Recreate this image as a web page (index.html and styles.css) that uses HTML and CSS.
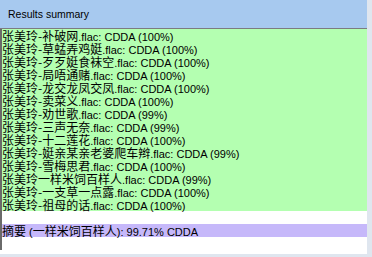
FILE: index.html
```html
<!DOCTYPE html>
<html lang="zh">
<head>
    <meta charset="UTF-8">
    <title>Results summary</title>
    <link rel="stylesheet" href="styles.css">
</head>
<body>
    <div class="window">
        <div class="header">Results summary</div>
        <div class="panel">
            <div class="list">
                <p><span class="cn">张美玲-补破网</span>.flac: CDDA (100%)</p>
                <p><span class="cn">张美玲-草蜢弄鸡娗</span>.flac: CDDA (100%)</p>
                <p><span class="cn">张美玲-歹歹娗食袜空</span>.flac: CDDA (100%)</p>
                <p><span class="cn">张美玲-局唔通赌</span>.flac: CDDA (100%)</p>
                <p><span class="cn">张美玲-龙交龙凤交凤</span>.flac: CDDA (100%)</p>
                <p><span class="cn">张美玲-卖菜义</span>.flac: CDDA (100%)</p>
                <p><span class="cn">张美玲-劝世歌</span>.flac: CDDA (99%)</p>
                <p><span class="cn">张美玲-三声无奈</span>.flac: CDDA (99%)</p>
                <p><span class="cn">张美玲-十二莲花</span>.flac: CDDA (100%)</p>
                <p><span class="cn">张美玲-娗亲某亲老婆爬车辫</span>.flac: CDDA (99%)</p>
                <p><span class="cn">张美玲-雪梅思君</span>.flac: CDDA (100%)</p>
                <p><span class="cn">张美玲一样米饲百样人</span>.flac: CDDA (99%)</p>
                <p><span class="cn">张美玲-一支草一点露</span>.flac: CDDA (100%)</p>
                <p><span class="cn">张美玲-祖母的话</span>.flac: CDDA (100%)</p>
            </div>
            <div class="gap"></div>
            <p class="summary"><span class="cn">摘要</span> (<span class="cn">一样米饲百样人</span>): 99.71% CDDA</p>
            <div class="gap"></div>
        </div>
    </div>
</body>
</html>
```

FILE: styles.css
```css
body {
    margin: 0;
    background-color: #dfe6ef;
    font-family: "Liberation Sans", "Noto Sans CJK SC", sans-serif;
    font-size: 11px;
    color: #000;
}

.window {
    width: 367px;
    height: 254px;
    background: white;
}

.header {
    height: 28px;
    line-height: 28px;
    padding-left: 8px;
    background-color: #a7c9ef;
    border-bottom: 1px solid #7c7c80;
    font-size: 10.5px;
}

.panel {
    border-left: 2px solid #6a6a6a;
}

.list {
    background-color: #b4ffb1;
}

p {
    margin: 0;
    height: 13px;
    line-height: 13px;
    white-space: nowrap;
}

.cn {
    font-family: "Noto Sans CJK SC", sans-serif;
    font-size: 12px;
}

.gap {
    height: 13px;
}

.summary {
    background-color: #c6b8fa;
}
```
